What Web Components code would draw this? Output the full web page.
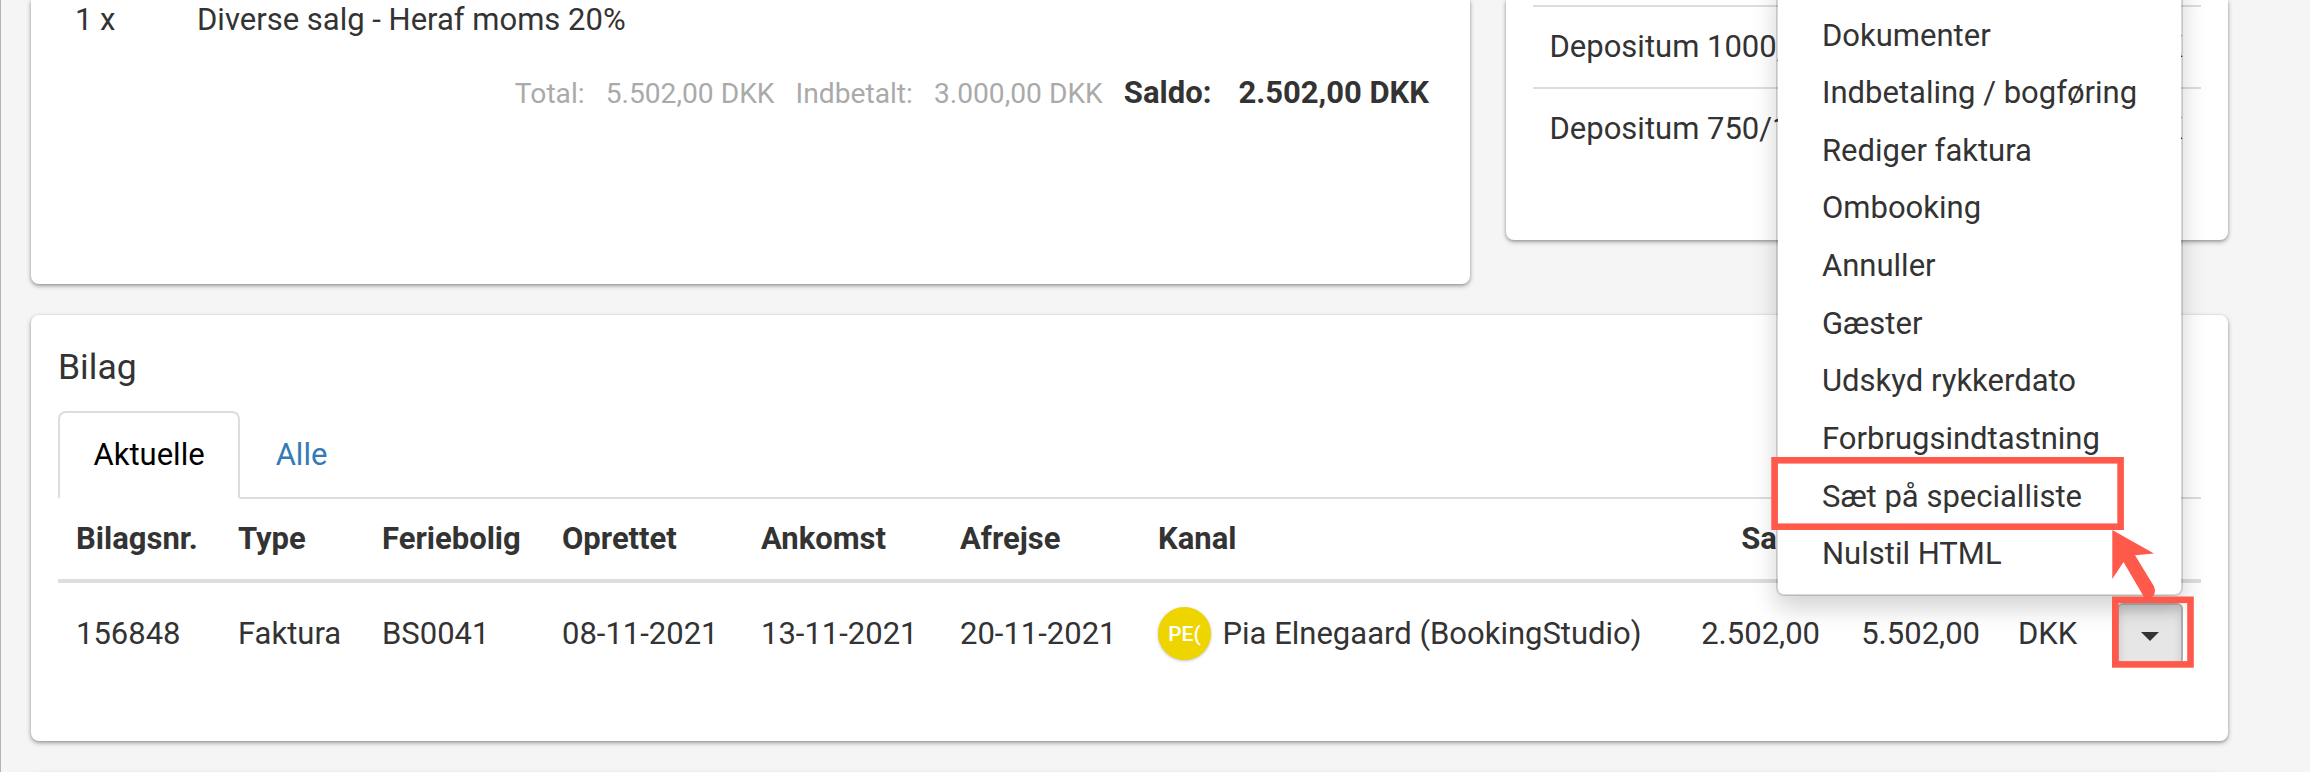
<!DOCTYPE html>
<html lang="da">
<head>
<meta charset="utf-8">
<title>Bilag</title>
<style>
  html, body {
    margin: 0;
    height: 772px;
    overflow: hidden;
  }
  body {
    font-family: Roboto, "Liberation Sans", sans-serif;
    font-size: 31px;
    color: #333;
    background: #f5f5f5;
  }
</style>
</head>
<body>
<booking-page></booking-page>

<script>
class BookingCard extends HTMLElement {
  constructor() {
    super();
    this.attachShadow({ mode: 'open' });
    this.shadowRoot.innerHTML = `
      <style>
        :host {
          display: block;
          box-sizing: border-box;
          background: #fff;
          border-radius: 8px;
          box-shadow: 0 2px 5px rgba(0, 0, 0, 0.3), 0 1px 3px rgba(0, 0, 0, 0.18);
        }
        :host([open-top]) {
          border-top-left-radius: 0;
          border-top-right-radius: 0;
        }
      </style>
      <slot></slot>
    `;
  }
}

class OrderSummary extends HTMLElement {
  constructor() {
    super();
    this.attachShadow({ mode: 'open' });
    this.shadowRoot.innerHTML = `
      <style>
        :host {
          display: block;
          padding-top: 1px;
        }
        .line {
          display: flex;
          height: 38px;
          line-height: 38px;
          padding-left: 44px;
        }
        .line .count {
          width: 122px;
        }
        .totals {
          display: flex;
          justify-content: flex-end;
          align-items: baseline;
          padding: 35px 41px 0 0;
          line-height: 38px;
          font-size: 28.2px;
          color: #aaa;
        }
        .totals .value {
          margin: 0 21px 0 21px;
        }
        .totals .saldo {
          font-size: 31px;
          font-weight: bold;
          color: #333;
        }
        .totals .saldo.value {
          margin: 0 0 0 27px;
        }
      </style>
      <div class="line"><span class="count">1 x</span><span>Diverse salg - Heraf moms 20%</span></div>
      <div class="totals">
        <span>Total:</span><span class="value">5.502,00 DKK</span>
        <span>Indbetalt:</span><span class="value">3.000,00 DKK</span>
        <span class="saldo">Saldo:</span><span class="saldo value">2.502,00 DKK</span>
      </div>
    `;
  }
}

class DepositList extends HTMLElement {
  constructor() {
    super();
    this.attachShadow({ mode: 'open' });
    this.shadowRoot.innerHTML = `
      <style>
        :host {
          display: block;
          padding: 5px 27px 0;
        }
        .row {
          display: flex;
          justify-content: space-between;
          box-sizing: border-box;
          height: 82px;
          line-height: 80px;
          padding: 0 18px 0 17px;
          border-top: 2px solid #ddd;
        }
      </style>
      <div class="row"><span>Depositum 1000,</span><span>DKK</span></div>
      <div class="row"><span>Depositum 750/1</span><span>DKK</span></div>
    `;
  }
}

class TabBar extends HTMLElement {
  constructor() {
    super();
    this.attachShadow({ mode: 'open' });
    this.shadowRoot.innerHTML = `
      <style>
        :host {
          display: flex;
          box-sizing: border-box;
          height: 88px;
          border-bottom: 2px solid #ddd;
        }
        .tab {
          box-sizing: border-box;
          height: 88px;
          line-height: 83px;
          padding: 0 33.5px;
          border: 2px solid transparent;
          color: #337ab7;
        }
        .tab.active {
          color: #000;
          background: #fff;
          border-color: #ddd;
          border-bottom-color: #fff;
          border-radius: 8px 8px 0 0;
        }
      </style>
      <div class="tab active">Aktuelle</div>
      <div class="tab">Alle</div>
    `;
  }
}

class UserAvatar extends HTMLElement {
  constructor() {
    super();
    this.attachShadow({ mode: 'open' });
    this.shadowRoot.innerHTML = `
      <style>
        :host {
          display: flex;
          align-items: center;
          justify-content: center;
          width: 53px;
          height: 53px;
          border-radius: 50%;
          background: #efd500;
          box-shadow: 0 1px 3px rgba(0, 0, 0, 0.25);
          color: #fff;
          font-size: 21px;
          font-weight: 500;
        }
      </style>
      <slot></slot>
    `;
  }
}

class DropdownButton extends HTMLElement {
  constructor() {
    super();
    this.attachShadow({ mode: 'open' });
    this.shadowRoot.innerHTML = `
      <style>
        :host {
          display: flex;
          align-items: center;
          justify-content: center;
          box-sizing: border-box;
          width: 66px;
          height: 62px;
          padding: 6px 0 0 0;
          background: #e6e6e6;
          border: 2px solid #adadad;
          border-radius: 6px;
          box-shadow: inset 0 6px 10px rgba(0, 0, 0, 0.125);
        }
        svg {
          display: block;
        }
      </style>
      <svg width="18" height="9" viewBox="0 0 18 9"><path d="M0 0H18L9 9Z" fill="#333"/></svg>
    `;
  }
}

class VoucherTable extends HTMLElement {
  constructor() {
    super();
    this.attachShadow({ mode: 'open' });
    this.shadowRoot.innerHTML = `
      <style>
        :host {
          display: block;
        }
        .row {
          display: grid;
          grid-template-columns: 162px 144px 180px 199px 199px 198px 503px 159px 160px 100px 1fr;
          align-items: center;
          box-sizing: border-box;
          padding-left: 18px;
          white-space: nowrap;
        }
        .head {
          height: 84px;
          padding-bottom: 1px;
          border-bottom: 4px solid #ddd;
          font-weight: bold;
        }
        .body {
          height: 101px;
        }
        .num {
          justify-self: end;
        }
        .currency {
          padding-left: 38px;
        }
        .channel {
          display: flex;
          align-items: center;
          gap: 11.5px;
        }
        .action {
          justify-self: end;
          margin-right: 18px;
        }
      </style>
      <div class="row head">
        <span>Bilagsnr.</span><span>Type</span><span>Feriebolig</span><span>Oprettet</span>
        <span>Ankomst</span><span>Afrejse</span><span>Kanal</span><span class="num">Saldo</span>
      </div>
      <div class="row body">
        <span>156848</span><span>Faktura</span><span>BS0041</span><span>08-11-2021</span>
        <span>13-11-2021</span><span>20-11-2021</span>
        <span class="channel"><user-avatar>PE(</user-avatar>Pia Elnegaard (BookingStudio)</span>
        <span class="num">2.502,00</span><span class="num">5.502,00</span>
        <span class="currency">DKK</span>
        <dropdown-button class="action"></dropdown-button>
      </div>
    `;
  }
}

class ActionMenu extends HTMLElement {
  constructor() {
    super();
    this.attachShadow({ mode: 'open' });
  }

  connectedCallback() {
    const items = [
      'Dokumenter',
      'Indbetaling / bogføring',
      'Rediger faktura',
      'Ombooking',
      'Annuller',
      'Gæster',
      'Udskyd rykkerdato',
      'Forbrugsindtastning',
      'Sæt på specialliste',
      'Nulstil HTML'
    ];

    this.shadowRoot.innerHTML = `
      <style>
        :host {
          display: block;
          box-sizing: border-box;
          width: 407px;
          padding: 26.5px 0 10.5px;
          background: #fff;
          background-clip: padding-box;
          border: 2px solid rgba(0, 0, 0, 0.15);
          border-top: none;
          border-radius: 0 0 8px 8px;
          box-shadow: 0 12px 24px rgba(0, 0, 0, 0.175);
        }
        .item {
          height: 57.67px;
          line-height: 57.67px;
          padding-left: 44px;
        }
      </style>
      ${items.map(item => `<div class="item">${item}</div>`).join('')}
    `;
  }
}

// red frames and the arrow that point out the menu entry
class GuideMarks extends HTMLElement {
  constructor() {
    super();
    this.attachShadow({ mode: 'open' });
    this.shadowRoot.innerHTML = `
      <style>
        :host {
          display: block;
        }
        svg {
          display: block;
        }
      </style>
      <svg width="430" height="220" viewBox="1770 450 430 220">
        <g fill="none" stroke="#ff594c" stroke-width="6.6">
          <rect x="1774.6" y="460.3" width="346" height="66.4"/>
          <rect x="2115.3" y="599.8" width="75.2" height="64.6"/>
        </g>
        <path d="M2112.3 530L2154 553.5L2135 555.3L2153.8 586Q2157 593 2152 597H2144L2123.5 562L2112.3 579Z" fill="#ff594c"/>
      </svg>
    `;
  }
}

class BookingPage extends HTMLElement {
  constructor() {
    super();
    this.attachShadow({ mode: 'open' });
    this.shadowRoot.innerHTML = `
      <style>
        :host {
          display: block;
          position: relative;
          box-sizing: border-box;
          height: 772px;
          padding: 0 82.5px 0 30px;
          border-left: 1px solid #b4b4b4;
          overflow: hidden;
        }
        .top {
          display: flex;
          justify-content: space-between;
          align-items: flex-start;
          height: 314.5px;
        }
        .summary {
          width: 1439px;
          height: 284px;
        }
        .deposits {
          width: 722px;
          height: 239.5px;
        }
        .vouchers {
          height: 426.5px;
          padding: 0 27px;
        }
        h2 {
          margin: 0;
          height: 96.5px;
          padding-top: 31px;
          box-sizing: border-box;
          line-height: 43px;
          font-size: 35.5px;
          font-weight: normal;
        }
        .next {
          height: 60px;
          margin-top: 32px;
        }
        action-menu {
          position: absolute;
          left: 1775px;
          top: -20px;
        }
        guide-marks {
          position: absolute;
          left: 1769px;
          top: 450px;
        }
      </style>
      <div class="top">
        <booking-card class="summary" open-top><order-summary></order-summary></booking-card>
        <booking-card class="deposits" open-top><deposit-list></deposit-list></booking-card>
      </div>
      <booking-card class="vouchers">
        <h2>Bilag</h2>
        <tab-bar></tab-bar>
        <voucher-table></voucher-table>
      </booking-card>
      <booking-card class="next"></booking-card>
      <action-menu></action-menu>
      <guide-marks></guide-marks>
    `;
  }
}

customElements.define('booking-card', BookingCard);
customElements.define('order-summary', OrderSummary);
customElements.define('deposit-list', DepositList);
customElements.define('tab-bar', TabBar);
customElements.define('user-avatar', UserAvatar);
customElements.define('dropdown-button', DropdownButton);
customElements.define('voucher-table', VoucherTable);
customElements.define('action-menu', ActionMenu);
customElements.define('guide-marks', GuideMarks);
customElements.define('booking-page', BookingPage);
</script>
</body>
</html>
